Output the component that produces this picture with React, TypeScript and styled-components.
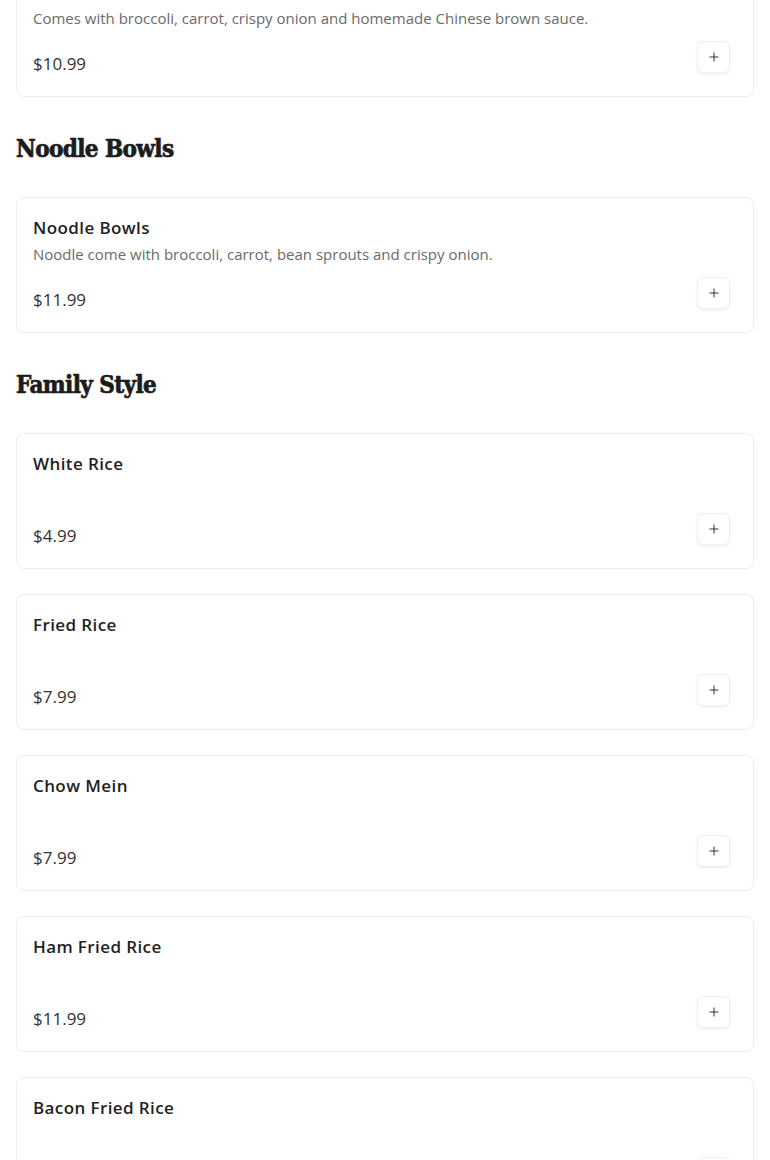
import styled, { createGlobalStyle } from 'styled-components'
import { Plus } from 'lucide-react'

type Item = { name: string; desc?: string; price: string }
type Section = { title?: string; items: Item[] }

const sections: Section[] = [
	{
		items: [
			{
				name: 'Beef Broccoli',
				desc: 'Comes with broccoli, carrot, crispy onion and homemade Chinese brown sauce.',
				price: '$10.99',
			},
		],
	},
	{
		title: 'Noodle Bowls',
		items: [
			{
				name: 'Noodle Bowls',
				desc: 'Noodle come with broccoli, carrot, bean sprouts and crispy onion.',
				price: '$11.99',
			},
		],
	},
	{
		title: 'Family Style',
		items: [
			{ name: 'White Rice', price: '$4.99' },
			{ name: 'Fried Rice', price: '$7.99' },
			{ name: 'Chow Mein', price: '$7.99' },
			{ name: 'Ham Fried Rice', price: '$11.99' },
			{ name: 'Bacon Fried Rice', price: '$11.99' },
		],
	},
]

function App() {
	return (
		<>
			<Global />
			<Page>
				{sections.map((s, i) => (
					<div key={i}>
						{s.title && <Heading>{s.title}</Heading>}
						<List>
							{s.items.map((it) => (
								<Card key={it.name}>
									<Name>{it.name}</Name>
									<Desc>{it.desc}</Desc>
									<Bottom>
										<Price>{it.price}</Price>
										<AddButton aria-label="add">
											<Plus size={14} strokeWidth={1.6} />
										</AddButton>
									</Bottom>
								</Card>
							))}
						</List>
					</div>
				))}
			</Page>
		</>
	)
}

const Global = createGlobalStyle`
	body {
		margin: 0;
		background: #fff;
		font-family: 'Open Sans', 'Liberation Sans', sans-serif;
	}
`

const Page = styled.main`
	margin-top: -39px;
	padding: 0 16px 40px;
`

const Heading = styled.h2`
	margin: 34px 0 30px;
	font-family: 'DejaVu Serif Condensed', 'DejaVu Serif', 'Liberation Serif', serif;
	font-stretch: condensed;
	font-weight: 700;
	font-size: 24px;
	line-height: 36px;
	letter-spacing: -0.6px;
	color: #1c1c1c;
	-webkit-text-stroke: 0.7px #1c1c1c;
`

const List = styled.div`
	display: flex;
	flex-direction: column;
	gap: 25px;
`

const Card = styled.div`
	border: 1px solid #ececec;
	border-radius: 8px;
	padding: 16px 16px 20px;
	background: #fff;
`

const Name = styled.div`
	font-size: 17px;
	font-weight: 600;
	line-height: 28px;
	color: #1f1f1f;
	letter-spacing: 0.4px;
`

const Desc = styled.div`
	font-size: 15px;
	line-height: 24px;
	min-height: 24px;
	color: #6a6a6a;
`

const Bottom = styled.div`
	display: flex;
	justify-content: space-between;
	align-items: flex-end;
	height: 24px;
	margin-top: 22px;
	padding-right: 7px;
`

const Price = styled.div`
	font-size: 17px;
	line-height: 24px;
	color: #333;
`

const AddButton = styled.button`
	flex: none;
	width: 33px;
	height: 32px;
	margin-bottom: 3px;
	display: flex;
	align-items: center;
	justify-content: center;
	padding: 0;
	border: 1px solid #f0f0f0;
	border-radius: 6px;
	background: #fff;
	color: #222;
	box-shadow: 0 1px 3px rgba(0, 0, 0, 0.08);
	cursor: pointer;
`

export default App
